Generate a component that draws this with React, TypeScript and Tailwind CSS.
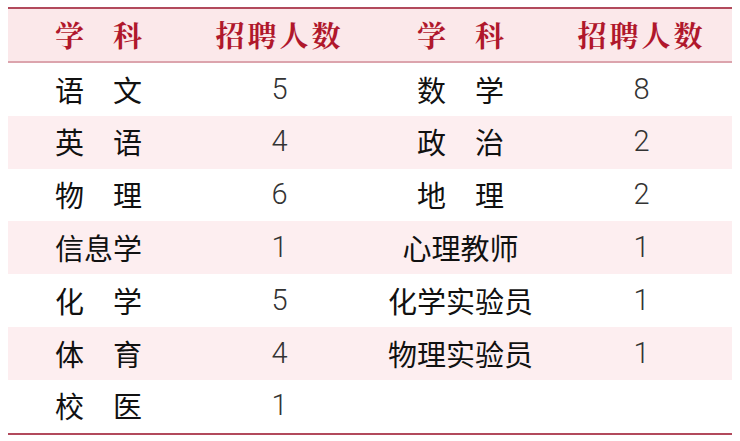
const rows: [string, string, string, string][] = [
  ["语　文", "5", "数　学", "8"],
  ["英　语", "4", "政　治", "2"],
  ["物　理", "6", "地　理", "2"],
  ["信息学", "1", "心理教师", "1"],
  ["化　学", "5", "化学实验员", "1"],
  ["体　育", "4", "物理实验员", "1"],
  ["校　医", "1", "", ""],
];

function HeadCell({ text, wide }: { text: string; wide?: boolean }) {
  return (
    <div
      className={`text-center font-['Noto_Serif_CJK_SC','Noto_Sans_CJK_SC',serif] ${wide ? "tracking-[3px]" : ""}`}
    >
      {text}
    </div>
  );
}

export default function App() {
  return (
    <div className="w-[740px] h-[441px] bg-white pt-[7px] pl-[8px]">
      <div className="w-[724px] border-t-2 border-b-2 border-[#b24a5c]">
        {/* header */}
        <div className="grid grid-cols-4 h-[54px] items-center bg-[#fbe8ea] border-b-2 border-[#dca4ad] text-[#b0172c] text-[29px] font-bold">
          <HeadCell text="学　科" />
          <HeadCell text="招聘人数" wide />
          <HeadCell text="学　科" />
          <HeadCell text="招聘人数" wide />
        </div>
        {rows.map((r, i) => (
          <div
            key={i}
            className={`grid grid-cols-4 h-[52.8px] items-center text-[29px] text-[#111] ${i % 2 === 1 ? "bg-[#fdeef0]" : "bg-white"}`}
          >
            <div className="text-center font-['Noto_Sans_CJK_SC',sans-serif]">{r[0]}</div>
            <div className="text-center font-light text-[#333] font-['Roboto','Open_Sans',sans-serif]">{r[1]}</div>
            <div className="text-center font-['Noto_Sans_CJK_SC',sans-serif]">{r[2]}</div>
            <div className="text-center font-light text-[#333] font-['Roboto','Open_Sans',sans-serif]">{r[3]}</div>
          </div>
        ))}
      </div>
    </div>
  );
}
